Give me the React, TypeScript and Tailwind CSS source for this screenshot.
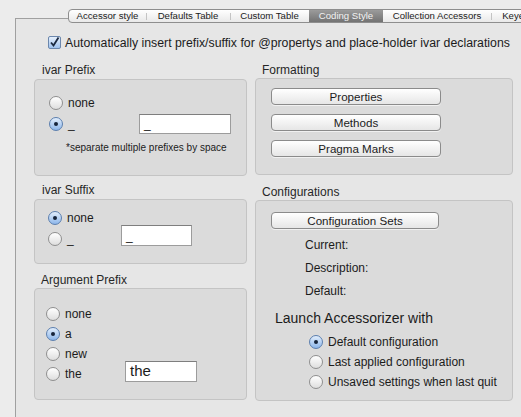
import React from "react";

const tabs = [
  { label: "Accessor style", w: "w-[77px]" },
  { label: "Defaults Table", w: "w-[84px]" },
  { label: "Custom Table", w: "w-[79px]" },
  { label: "Coding Style", w: "w-[74px]", active: true },
  { label: "Collection Accessors", w: "w-[108px]" },
  { label: "Keyed Accessors", w: "w-[96px]" },
];

function Radio({ on }: { on?: boolean }) {
  return (
    <span
      className={`flex h-[14px] w-[14px] shrink-0 items-center justify-center rounded-full border ${
        on
          ? "border-[#5b7fae] bg-linear-to-b from-[#e2eefc] to-[#8db6ea]"
          : "border-[#8f8f8f] bg-linear-to-b from-[#ffffff] to-[#dedede]"
      }`}
    >
      {on && <span className="h-[4px] w-[4px] rounded-full bg-[#16243a]" />}
    </span>
  );
}

function RadioRow({ label, on, className = "" }: { label: string; on?: boolean; className?: string }) {
  return (
    <div className={`flex h-[14px] items-center gap-[5px] text-[12px] ${className}`}>
      <Radio on={on} />
      <span className="leading-[14px]">{label}</span>
    </div>
  );
}

function GroupLabel({ text, className = "" }: { text: string; className?: string }) {
  return <div className={`h-[14px] text-[12px] leading-[14px] text-[#262626] ${className}`}>{text}</div>;
}

function Button({ label, w }: { label: string; w: string }) {
  return (
    <div
      className={`flex h-[17px] ${w} items-center justify-center rounded-[4px] border border-[#8b8b8b] bg-linear-to-b from-[#ffffff] to-[#e6e6e6] text-[11.6px] leading-[14px] shadow-[0_1px_0_rgba(255,255,255,0.6)]`}
    >
      {label}
    </div>
  );
}

function Field({ value, className }: { value: string; className: string }) {
  return (
    <div
      className={`flex items-center border border-[#9c9c9c] border-t-[#7e7e7e] bg-white pl-[4px] ${className}`}
    >
      {value}
    </div>
  );
}

export default function App() {
  return (
    <div className="flex h-[417px] w-[521px] flex-col overflow-hidden bg-[#ececec] font-['Liberation_Sans',Arial,sans-serif] text-[#1b1b1b]">
      {/* tab strip, runs off the right edge like the window */}
      <div className="relative z-10 ml-[68px] mt-[9px] flex h-[14px] w-[520px] shrink-0 items-stretch overflow-hidden rounded-l-[4px] border border-[#8e8e8e] bg-linear-to-b from-[#ffffff] to-[#e9e9e9] text-[9.6px] whitespace-nowrap">
        {tabs.map((t, i) => {
          const prev = tabs[i - 1];
          const sep = i > 0 && !t.active && !(prev && prev.active);
          return (
            <div key={t.label} className={`relative flex ${t.w} shrink-0 items-center justify-center`}>
              {sep && <span className="absolute left-0 top-[3px] h-[7px] w-px bg-[#c4c4c4]" />}
              {t.active ? (
                <span className="flex h-full w-full items-center justify-center bg-linear-to-b from-[#9b9b9b] to-[#737373] text-[#f2f2f2]">
                  {t.label}
                </span>
              ) : (
                <span>{t.label}</span>
              )}
            </div>
          );
        })}
      </div>

      {/* tab panel */}
      <div className="-mt-[5px] ml-[15px] flex-1 border-l border-t border-[#a0a0a0] bg-[#e6e6e6]">
        <div className="mt-[17px] flex h-[13px] items-center gap-[4px] pl-[32px]">
          <span className="flex h-[13px] w-[13px] shrink-0 items-center justify-center rounded-[2px] border border-[#6b87ad] bg-linear-to-b from-[#e6f0fc] to-[#9fc2ee]">
            <svg width="11" height="11" viewBox="0 0 11 11">
              <path d="M2 5.5 L4.5 8.5 L9.5 0.5" fill="none" stroke="#1b2940" strokeWidth="1.8" />
            </svg>
          </span>
          <span className="text-[12.3px] leading-[14px]">
            Automatically insert prefix/suffix for @propertys and place-holder ivar declarations
          </span>
        </div>

        <div className="ml-[18px] mt-[14px] flex gap-[8px]">
          {/* left column */}
          <div className="flex w-[213px] flex-col">
            <GroupLabel text="ivar Prefix" className="pl-[8px]" />
            <div className="mt-[2px] h-[97px] rounded-[4px] border border-[#c4c4c4] bg-[#dbdbdb] pl-[14px] pt-[16px]">
              <RadioRow label="none" />
              <div className="mt-[4px] flex h-[20px] items-center text-[12px]">
                <Radio on />
                <span className="ml-[5px] w-[71px]">_</span>
                <Field value="_" className="h-[20px] w-[92px] text-[12px]" />
              </div>
              <div className="mt-[8px] pl-[17px] text-[10px] leading-[12px]">*separate multiple prefixes by space</div>
            </div>

            <GroupLabel text="ivar Suffix" className="mt-[7px] pl-[8px]" />
            <div className="mt-[2px] flex h-[65px] rounded-[4px] border border-[#c4c4c4] bg-[#dbdbdb] pl-[13px] pt-[11px]">
              <div className="flex w-[73px] flex-col gap-[7px]">
                <RadioRow label="none" on />
                <RadioRow label="_" />
              </div>
              <Field value="_" className="mt-[14px] h-[21px] w-[71px] text-[12px]" />
            </div>

            <GroupLabel text="Argument Prefix" className="mt-[9px] pl-[7px]" />
            <div className="mt-[1px] flex h-[112px] rounded-[4px] border border-[#c4c4c4] bg-[#dbdbdb] pl-[11px] pt-[18px]">
              <div className="flex w-[79px] flex-col gap-[6px]">
                <RadioRow label="none" />
                <RadioRow label="a" on />
                <RadioRow label="new" />
                <RadioRow label="the" />
              </div>
              <Field value="the" className="mt-[54px] h-[21px] w-[72px] text-[15px]" />
            </div>
          </div>

          {/* right column */}
          <div className="flex w-[258px] flex-col">
            <GroupLabel text="Formatting" className="pl-[7px]" />
            <div className="mt-[1px] flex h-[97px] flex-col gap-[9px] rounded-[4px] border border-[#c4c4c4] bg-[#dbdbdb] pl-[15px] pt-[9px]">
              <Button label="Properties" w="w-[170px]" />
              <Button label="Methods" w="w-[170px]" />
              <Button label="Pragma Marks" w="w-[170px]" />
            </div>

            <GroupLabel text="Configurations" className="mt-[10px] pl-[7px]" />
            <div className="mt-[1px] h-[201px] rounded-[4px] border border-[#c4c4c4] bg-[#dbdbdb] pl-[15px] pt-[11px]">
              <Button label="Configuration Sets" w="w-[168px]" />
              <div className="ml-[34px] mt-[9px] flex flex-col gap-[9px] text-[12px] leading-[14px]">
                <div className="h-[14px]">Current:</div>
                <div className="h-[14px]">Description:</div>
                <div className="h-[14px]">Default:</div>
              </div>
              <div className="ml-[4px] mt-[12px] text-[14px] leading-[16px]">Launch Accessorizer with</div>
              <div className="ml-[38px] mt-[9px] flex flex-col gap-[6px]">
                <RadioRow label="Default configuration" on />
                <RadioRow label="Last applied configuration" />
                <RadioRow label="Unsaved settings when last quit" />
              </div>
            </div>
          </div>
        </div>
      </div>
    </div>
  );
}
